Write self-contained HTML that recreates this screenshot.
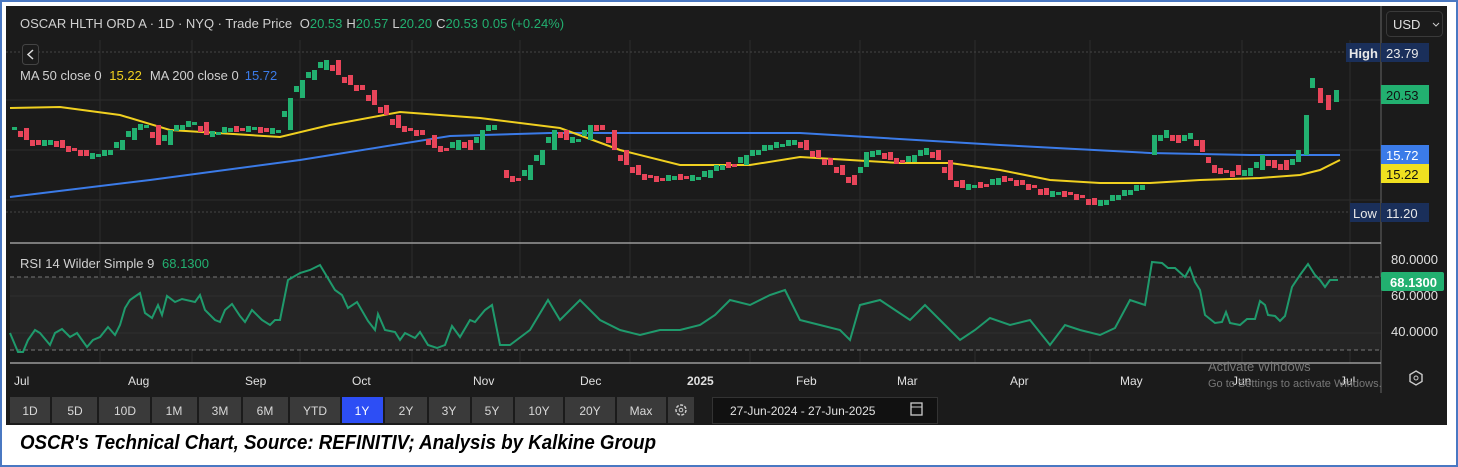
<!DOCTYPE html>
<html><head><meta charset="utf-8"><style>
html,body{margin:0;padding:0;background:#fff;width:1458px;height:467px;overflow:hidden}
svg{display:block}
text{font-family:"Liberation Sans",sans-serif}
.g{fill:#22b070}.r{fill:#e8455a}
</style></head><body>
<svg width="1458" height="467" viewBox="0 0 1458 467" xmlns="http://www.w3.org/2000/svg">
<rect x="0" y="0" width="1458" height="467" fill="#fff"/>
<rect x="1" y="1" width="1456" height="465" fill="none" stroke="#4a78c2" stroke-width="2"/>
<rect x="6" y="6" width="1441" height="419" fill="#1b1b1b"/>
<g stroke="#2c2c2c" stroke-width="1">
<line x1="100" y1="40" x2="100" y2="363"/><line x1="192" y1="40" x2="192" y2="363"/><line x1="300" y1="40" x2="300" y2="363"/>
<line x1="412" y1="40" x2="412" y2="363"/><line x1="520" y1="40" x2="520" y2="363"/><line x1="630" y1="40" x2="630" y2="363"/>
<line x1="750" y1="40" x2="750" y2="363"/><line x1="860" y1="40" x2="860" y2="363"/><line x1="975" y1="40" x2="975" y2="363"/>
<line x1="1090" y1="40" x2="1090" y2="363"/><line x1="1242" y1="40" x2="1242" y2="363"/><line x1="1350" y1="40" x2="1350" y2="363"/>
<line x1="6" y1="100" x2="1381" y2="100"/><line x1="6" y1="150" x2="1381" y2="150"/><line x1="6" y1="200" x2="1381" y2="200"/>
</g>
<line x1="6" y1="52" x2="1381" y2="52" stroke="#444" stroke-dasharray="2,2"/>
<line x1="6" y1="212" x2="1381" y2="212" stroke="#444" stroke-dasharray="2,2"/>
<line x1="1381" y1="6" x2="1381" y2="393" stroke="#666"/>
<line x1="10" y1="243" x2="1381" y2="243" stroke="#9a9a9a" stroke-width="1.5"/>
<line x1="10" y1="363" x2="1381" y2="363" stroke="#9a9a9a" stroke-width="1.5"/>
<rect x="10" y="277" width="1371" height="73" fill="#252525"/>
<line x1="10" y1="277" x2="1381" y2="277" stroke="#777" stroke-dasharray="4,3"/>
<line x1="10" y1="350" x2="1381" y2="350" stroke="#777" stroke-dasharray="4,3"/>
<line x1="10" y1="296" x2="1381" y2="296" stroke="#2f2f2f"/><line x1="10" y1="333" x2="1381" y2="333" stroke="#2f2f2f"/>
<text x="20" y="28" font-size="13" fill="#d0d0d0">OSCAR HLTH ORD A · 1D · NYQ · Trade Price <tspan dx="4">O</tspan><tspan fill="#22b070">20.53</tspan><tspan dx="4">H</tspan><tspan fill="#22b070">20.57</tspan><tspan dx="4">L</tspan><tspan fill="#22b070">20.20</tspan><tspan dx="4">C</tspan><tspan fill="#22b070">20.53</tspan><tspan dx="4" fill="#22b070">0.05 (+0.24%)</tspan></text>
<rect x="22.5" y="44.5" width="16" height="20" rx="3" fill="#1b1b1b" stroke="#444"/>
<path d="M33 50 L28 54.5 L33 59" stroke="#ddd" fill="none" stroke-width="1.5"/>
<text x="20" y="80" font-size="13" fill="#d0d0d0">MA 50 close 0 <tspan dx="4" fill="#f0d020">15.22</tspan><tspan dx="8">MA 200 close 0</tspan><tspan dx="6" fill="#3b7be8">15.72</tspan></text>
<rect x="1386.5" y="11.5" width="56" height="25" rx="4" fill="#1b1b1b" stroke="#3a3a3a"/>
<text x="1393" y="29" font-size="13" fill="#e0e0e0">USD</text>
<path d="M1433 23 L1436 26 L1439 23" stroke="#ccc" fill="none"/>
<polyline fill="none" stroke="#3b7be8" stroke-width="2" points="10,197 150,180 300,160 450,136 550,133 800,133 1000,145 1150,153 1250,155 1340,155"/>
<polyline fill="none" stroke="#f0d020" stroke-width="2" points="10,108 60,107 120,115 170,130 280,137 330,125 400,112 480,118 560,128 620,150 680,165 750,165 800,157 850,160 900,163 950,163 1000,170 1050,180 1100,183 1150,183 1200,180 1260,178 1300,175 1320,170 1340,160"/>
<g>
<rect class="g" x="12" y="127" width="5" height="3"/><rect class="r" x="24" y="128" width="5" height="12"/><rect class="r" x="36" y="140" width="5" height="5"/><rect class="g" x="48" y="140" width="5" height="5"/><rect class="r" x="60" y="140" width="5" height="8"/><rect class="r" x="72" y="148" width="5" height="3"/><rect class="r" x="84" y="150" width="5" height="6"/><rect class="g" x="96" y="154" width="5" height="3"/><rect class="g" x="108" y="150" width="5" height="5"/><rect class="g" x="120" y="140" width="5" height="10"/><rect class="g" x="132" y="128" width="5" height="12"/><rect class="g" x="144" y="125" width="5" height="3"/><rect class="r" x="156" y="125" width="5" height="20"/><rect class="g" x="168" y="130" width="5" height="15"/><rect class="g" x="180" y="125" width="5" height="5"/><rect class="g" x="192" y="122" width="5" height="3"/><rect class="r" x="204" y="122" width="5" height="13"/><rect class="g" x="216" y="132" width="5" height="3"/><rect class="g" x="228" y="128" width="5" height="4"/><rect class="r" x="240" y="128" width="5" height="3"/><rect class="g" x="252" y="127" width="5" height="3"/><rect class="r" x="264" y="128" width="5" height="4"/><rect class="g" x="276" y="130" width="5" height="3"/><rect class="g" x="288" y="98" width="5" height="32"/><rect class="g" x="300" y="80" width="5" height="18"/><rect class="g" x="312" y="70" width="5" height="10"/><rect class="g" x="324" y="60" width="5" height="10"/><rect class="r" x="336" y="60" width="5" height="15"/><rect class="r" x="348" y="75" width="5" height="10"/><rect class="r" x="360" y="85" width="5" height="5"/><rect class="r" x="372" y="90" width="5" height="15"/><rect class="r" x="384" y="105" width="5" height="10"/><rect class="r" x="396" y="115" width="5" height="13"/><rect class="r" x="408" y="128" width="5" height="3"/><rect class="r" x="420" y="130" width="5" height="5"/><rect class="r" x="432" y="135" width="5" height="13"/><rect class="r" x="444" y="148" width="5" height="3"/><rect class="g" x="456" y="140" width="5" height="10"/><rect class="r" x="468" y="140" width="5" height="10"/><rect class="g" x="480" y="130" width="5" height="20"/><rect class="g" x="492" y="125" width="5" height="5"/><rect class="r" x="504" y="170" width="5" height="8"/><rect class="r" x="516" y="178" width="5" height="3"/><rect class="g" x="528" y="165" width="5" height="15"/><rect class="g" x="540" y="150" width="5" height="15"/><rect class="g" x="552" y="130" width="5" height="20"/><rect class="r" x="564" y="130" width="5" height="10"/><rect class="g" x="576" y="139" width="5" height="3"/><rect class="g" x="588" y="125" width="5" height="15"/><rect class="r" x="600" y="125" width="5" height="5"/><rect class="r" x="612" y="130" width="5" height="20"/><rect class="r" x="624" y="150" width="5" height="15"/><rect class="r" x="636" y="165" width="5" height="10"/><rect class="r" x="648" y="175" width="5" height="3"/><rect class="r" x="660" y="178" width="5" height="3"/><rect class="g" x="672" y="176" width="5" height="4"/><rect class="r" x="684" y="176" width="5" height="3"/><rect class="g" x="696" y="177" width="5" height="3"/><rect class="g" x="708" y="170" width="5" height="8"/><rect class="g" x="720" y="165" width="5" height="5"/><rect class="r" x="732" y="164" width="5" height="3"/><rect class="g" x="744" y="155" width="5" height="10"/><rect class="g" x="756" y="150" width="5" height="5"/><rect class="g" x="768" y="145" width="5" height="5"/><rect class="g" x="780" y="144" width="5" height="3"/><rect class="g" x="792" y="140" width="5" height="5"/><rect class="r" x="804" y="140" width="5" height="10"/><rect class="r" x="816" y="150" width="5" height="8"/><rect class="r" x="828" y="158" width="5" height="7"/><rect class="r" x="840" y="165" width="5" height="10"/><rect class="r" x="852" y="175" width="5" height="10"/><rect class="g" x="864" y="152" width="5" height="15"/><rect class="g" x="876" y="150" width="5" height="5"/><rect class="r" x="888" y="152" width="5" height="8"/><rect class="r" x="900" y="160" width="5" height="3"/><rect class="g" x="912" y="155" width="5" height="7"/><rect class="g" x="924" y="148" width="5" height="7"/><rect class="r" x="936" y="150" width="5" height="10"/><rect class="r" x="948" y="160" width="5" height="20"/><rect class="r" x="960" y="180" width="5" height="8"/><rect class="g" x="972" y="185" width="5" height="3"/><rect class="r" x="984" y="184" width="5" height="3"/><rect class="g" x="996" y="178" width="5" height="7"/><rect class="r" x="1008" y="178" width="5" height="3"/><rect class="r" x="1020" y="180" width="5" height="5"/><rect class="r" x="1032" y="185" width="5" height="3"/><rect class="r" x="1044" y="188" width="5" height="7"/><rect class="g" x="1056" y="192" width="5" height="3"/><rect class="r" x="1068" y="192" width="5" height="3"/><rect class="r" x="1080" y="195" width="5" height="3"/><rect class="r" x="1092" y="198" width="5" height="7"/><rect class="g" x="1104" y="200" width="5" height="5"/><rect class="g" x="1116" y="195" width="5" height="5"/><rect class="g" x="1128" y="190" width="5" height="5"/><rect class="g" x="1140" y="185" width="5" height="5"/><rect class="g" x="1152" y="135" width="5" height="20"/><rect class="g" x="1164" y="130" width="5" height="8"/><rect class="r" x="1176" y="135" width="5" height="8"/><rect class="g" x="1188" y="133" width="5" height="6"/><rect class="r" x="1200" y="140" width="5" height="12"/><rect class="r" x="1212" y="165" width="5" height="8"/><rect class="r" x="1224" y="170" width="5" height="3"/><rect class="r" x="1236" y="165" width="5" height="10"/><rect class="g" x="1248" y="168" width="5" height="8"/><rect class="g" x="1260" y="155" width="5" height="15"/><rect class="r" x="1272" y="160" width="5" height="8"/><rect class="r" x="1284" y="160" width="5" height="10"/><rect class="g" x="1296" y="150" width="5" height="12"/><rect class="g" x="1304" y="115" width="5" height="40"/><rect class="g" x="1310" y="78" width="5" height="10"/><rect class="r" x="1318" y="88" width="5" height="15"/><rect class="r" x="1326" y="95" width="5" height="15"/><rect class="g" x="1334" y="90" width="5" height="12"/>
</g>
<g>
<rect class="r" x="18" y="131" width="5" height="6"/><rect class="r" x="30" y="140" width="5" height="6"/><rect class="g" x="42" y="140" width="5" height="6"/><rect class="r" x="54" y="141" width="5" height="6"/><rect class="r" x="66" y="146" width="5" height="6"/><rect class="r" x="78" y="150" width="5" height="6"/><rect class="g" x="90" y="153" width="5" height="6"/><rect class="g" x="102" y="150" width="5" height="6"/><rect class="g" x="114" y="142" width="5" height="6"/><rect class="g" x="126" y="131" width="5" height="6"/><rect class="g" x="138" y="124" width="5" height="6"/><rect class="r" x="150" y="132" width="5" height="6"/><rect class="g" x="162" y="135" width="5" height="6"/><rect class="g" x="174" y="125" width="5" height="6"/><rect class="g" x="186" y="121" width="5" height="6"/><rect class="r" x="198" y="126" width="5" height="6"/><rect class="g" x="210" y="131" width="5" height="6"/><rect class="g" x="222" y="127" width="5" height="6"/><rect class="r" x="234" y="126" width="5" height="6"/><rect class="g" x="246" y="126" width="5" height="6"/><rect class="r" x="258" y="127" width="5" height="6"/><rect class="g" x="270" y="128" width="5" height="6"/><rect class="g" x="282" y="111" width="5" height="6"/><rect class="g" x="294" y="86" width="5" height="6"/><rect class="g" x="306" y="72" width="5" height="6"/><rect class="g" x="318" y="62" width="5" height="6"/><rect class="r" x="330" y="65" width="5" height="6"/><rect class="r" x="342" y="77" width="5" height="6"/><rect class="r" x="354" y="85" width="5" height="6"/><rect class="r" x="366" y="95" width="5" height="6"/><rect class="r" x="378" y="107" width="5" height="6"/><rect class="r" x="390" y="119" width="5" height="6"/><rect class="r" x="402" y="126" width="5" height="6"/><rect class="r" x="414" y="130" width="5" height="6"/><rect class="r" x="426" y="139" width="5" height="6"/><rect class="r" x="438" y="146" width="5" height="6"/><rect class="g" x="450" y="142" width="5" height="6"/><rect class="r" x="462" y="142" width="5" height="6"/><rect class="g" x="474" y="137" width="5" height="6"/><rect class="g" x="486" y="125" width="5" height="6"/><rect class="r" x="510" y="176" width="5" height="6"/><rect class="g" x="522" y="170" width="5" height="6"/><rect class="g" x="534" y="155" width="5" height="6"/><rect class="g" x="546" y="137" width="5" height="6"/><rect class="r" x="558" y="132" width="5" height="6"/><rect class="g" x="570" y="137" width="5" height="6"/><rect class="g" x="582" y="130" width="5" height="6"/><rect class="r" x="594" y="125" width="5" height="6"/><rect class="r" x="606" y="137" width="5" height="6"/><rect class="r" x="618" y="155" width="5" height="6"/><rect class="r" x="630" y="167" width="5" height="6"/><rect class="r" x="642" y="174" width="5" height="6"/><rect class="r" x="654" y="176" width="5" height="6"/><rect class="g" x="666" y="175" width="5" height="6"/><rect class="r" x="678" y="174" width="5" height="6"/><rect class="g" x="690" y="175" width="5" height="6"/><rect class="g" x="702" y="171" width="5" height="6"/><rect class="g" x="714" y="165" width="5" height="6"/><rect class="r" x="726" y="162" width="5" height="6"/><rect class="g" x="738" y="157" width="5" height="6"/><rect class="g" x="750" y="150" width="5" height="6"/><rect class="g" x="762" y="145" width="5" height="6"/><rect class="g" x="774" y="142" width="5" height="6"/><rect class="g" x="786" y="140" width="5" height="6"/><rect class="r" x="798" y="142" width="5" height="6"/><rect class="r" x="810" y="151" width="5" height="6"/><rect class="r" x="822" y="159" width="5" height="6"/><rect class="r" x="834" y="167" width="5" height="6"/><rect class="r" x="846" y="177" width="5" height="6"/><rect class="g" x="858" y="167" width="5" height="6"/><rect class="g" x="870" y="151" width="5" height="6"/><rect class="r" x="882" y="153" width="5" height="6"/><rect class="r" x="894" y="158" width="5" height="6"/><rect class="g" x="906" y="156" width="5" height="6"/><rect class="g" x="918" y="150" width="5" height="6"/><rect class="r" x="930" y="152" width="5" height="6"/><rect class="r" x="942" y="167" width="5" height="6"/><rect class="r" x="954" y="181" width="5" height="6"/><rect class="g" x="966" y="184" width="5" height="6"/><rect class="r" x="978" y="182" width="5" height="6"/><rect class="g" x="990" y="179" width="5" height="6"/><rect class="r" x="1002" y="176" width="5" height="6"/><rect class="r" x="1014" y="180" width="5" height="6"/><rect class="r" x="1026" y="184" width="5" height="6"/><rect class="r" x="1038" y="189" width="5" height="6"/><rect class="g" x="1050" y="191" width="5" height="6"/><rect class="r" x="1062" y="191" width="5" height="6"/><rect class="r" x="1074" y="194" width="5" height="6"/><rect class="r" x="1086" y="199" width="5" height="6"/><rect class="g" x="1098" y="200" width="5" height="6"/><rect class="g" x="1110" y="195" width="5" height="6"/><rect class="g" x="1122" y="190" width="5" height="6"/><rect class="g" x="1134" y="185" width="5" height="6"/><rect class="g" x="1158" y="135" width="5" height="6"/><rect class="r" x="1170" y="135" width="5" height="6"/><rect class="g" x="1182" y="135" width="5" height="6"/><rect class="r" x="1194" y="140" width="5" height="6"/><rect class="r" x="1206" y="157" width="5" height="6"/><rect class="r" x="1218" y="168" width="5" height="6"/><rect class="r" x="1230" y="171" width="5" height="6"/><rect class="g" x="1242" y="170" width="5" height="6"/><rect class="g" x="1254" y="162" width="5" height="6"/><rect class="r" x="1266" y="160" width="5" height="6"/><rect class="r" x="1278" y="164" width="5" height="6"/><rect class="g" x="1290" y="159" width="5" height="6"/>
</g>
<rect x="1346" y="43" width="34" height="19" fill="#1a2f5a"/><text x="1349" y="58" font-size="13" fill="#e8e8e8" font-weight="bold">High</text>
<rect x="1381" y="43" width="48" height="19" fill="#1a2f5a"/><text x="1386" y="58" font-size="13" fill="#e8e8e8">23.79</text>
<rect x="1381" y="85" width="48" height="19" fill="#22b070"/><text x="1386" y="100" font-size="13" fill="#111">20.53</text>
<rect x="1381" y="145" width="48" height="19" fill="#3b7be8"/><text x="1386" y="160" font-size="13" fill="#fff">15.72</text>
<rect x="1381" y="164" width="48" height="19" fill="#f0e020"/><text x="1386" y="179" font-size="13" fill="#111">15.22</text>
<rect x="1350" y="203" width="30" height="19" fill="#1a2f5a"/><text x="1353" y="218" font-size="13" fill="#e8e8e8">Low</text>
<rect x="1381" y="203" width="48" height="19" fill="#1a2f5a"/><text x="1386" y="218" font-size="13" fill="#e8e8e8">11.20</text>
<text x="20" y="268" font-size="13" fill="#d0d0d0">RSI 14 Wilder Simple 9 <tspan dx="4" fill="#22b070">68.1300</tspan></text>
<polyline fill="none" stroke="#1f9a6c" stroke-width="2" points="10,333 18,352 23,352 28,340 35,330 40,333 50,345 55,333 62,329 70,337 77,333 87,347 93,340 100,337 108,327 115,335 120,325 125,308 130,300 140,293 145,313 152,318 158,305 162,315 167,296 175,302 182,299 195,302 200,295 205,310 215,320 220,322 225,310 232,304 240,316 245,322 252,310 262,320 270,325 275,320 280,320 288,280 300,273 310,270 320,265 335,290 342,295 348,308 357,302 368,321 375,330 378,314 385,330 395,332 400,340 405,333 415,338 420,332 428,345 437,348 445,345 452,326 460,337 470,320 475,322 485,310 492,305 500,345 510,345 530,330 548,300 560,320 580,300 600,320 620,330 640,335 660,330 680,330 700,325 715,315 730,300 750,305 770,295 785,290 800,320 820,325 840,330 850,340 860,305 880,300 895,310 910,320 925,305 945,325 960,340 975,330 990,318 1010,325 1030,320 1050,345 1065,325 1080,330 1100,335 1115,328 1130,300 1145,305 1152,262 1162,263 1168,268 1175,268 1185,277 1190,268 1195,282 1200,290 1205,315 1215,323 1222,322 1226,312 1230,323 1240,325 1247,319 1255,319 1260,301 1265,305 1268,315 1275,316 1280,321 1285,316 1292,287 1300,275 1308,264 1315,275 1320,280 1325,287 1330,280 1338,280"/>
<g font-size="13" fill="#e0e0e0">
<text x="1391" y="264">80.0000</text><text x="1391" y="300">60.0000</text><text x="1391" y="336">40.0000</text>
</g>
<rect x="1381" y="272" width="63" height="19" rx="2" fill="#22b070"/><text x="1390" y="287" font-size="13" fill="#fff" font-weight="bold">68.1300</text>
<g font-size="12" fill="#e0e0e0">
<text x="14" y="385">Jul</text><text x="128" y="385">Aug</text><text x="245" y="385">Sep</text><text x="352" y="385">Oct</text><text x="473" y="385">Nov</text><text x="580" y="385">Dec</text><text x="687" y="385" font-weight="bold">2025</text><text x="796" y="385">Feb</text><text x="897" y="385">Mar</text><text x="1010" y="385">Apr</text><text x="1120" y="385">May</text><text x="1232" y="385">Jun</text><text x="1340" y="385">Jul</text>
</g>
<text x="1208" y="371" font-size="13" fill="#777">Activate Windows</text>
<text x="1208" y="387" font-size="11" fill="#777">Go to Settings to activate Windows.</text>
<path d="M1416 371 L1422 374.5 L1422 381.5 L1416 385 L1410 381.5 L1410 374.5 Z" fill="none" stroke="#ccc" stroke-width="1.4"/><circle cx="1416" cy="378" r="2" fill="none" stroke="#ccc"/>
<g font-size="12" fill="#d8d8d8" text-anchor="middle">
<rect x="10" y="397" width="40" height="26" fill="#3a3a3a"/><text x="30" y="415">1D</text>
<rect x="52" y="397" width="45" height="26" fill="#3a3a3a"/><text x="75" y="415">5D</text>
<rect x="99" y="397" width="51" height="26" fill="#3a3a3a"/><text x="125" y="415">10D</text>
<rect x="152" y="397" width="45" height="26" fill="#3a3a3a"/><text x="174" y="415">1M</text>
<rect x="199" y="397" width="42" height="26" fill="#3a3a3a"/><text x="220" y="415">3M</text>
<rect x="243" y="397" width="45" height="26" fill="#3a3a3a"/><text x="265" y="415">6M</text>
<rect x="290" y="397" width="50" height="26" fill="#3a3a3a"/><text x="315" y="415">YTD</text>
<rect x="342" y="397" width="41" height="26" fill="#2d4ef5"/><text x="362" y="415" fill="#fff">1Y</text>
<rect x="385" y="397" width="42" height="26" fill="#3a3a3a"/><text x="406" y="415">2Y</text>
<rect x="429" y="397" width="41" height="26" fill="#3a3a3a"/><text x="449" y="415">3Y</text>
<rect x="472" y="397" width="41" height="26" fill="#3a3a3a"/><text x="492" y="415">5Y</text>
<rect x="515" y="397" width="48" height="26" fill="#3a3a3a"/><text x="539" y="415">10Y</text>
<rect x="565" y="397" width="50" height="26" fill="#3a3a3a"/><text x="590" y="415">20Y</text>
<rect x="617" y="397" width="49" height="26" fill="#3a3a3a"/><text x="641" y="415">Max</text>
<rect x="668" y="397" width="26" height="26" fill="#3a3a3a"/>
</g>
<circle cx="681" cy="410" r="5" fill="none" stroke="#ccc" stroke-width="1.5" stroke-dasharray="3,1.5"/><circle cx="681" cy="410" r="1.8" fill="none" stroke="#ccc"/>
<rect x="712.5" y="397.5" width="225" height="26" fill="#111" stroke="#333"/>
<text x="730" y="415" font-size="12" fill="#e0e0e0">27-Jun-2024  -  27-Jun-2025</text>
<rect x="911" y="403" width="11" height="12" fill="none" stroke="#ccc" stroke-width="1.3"/><line x1="911" y1="407" x2="922" y2="407" stroke="#ccc"/>
<text x="20" y="449" font-size="20" font-weight="bold" font-style="italic" fill="#000" textLength="636" lengthAdjust="spacingAndGlyphs">OSCR's Technical Chart, Source: REFINITIV; Analysis by Kalkine Group</text>
</svg>
</body></html>
